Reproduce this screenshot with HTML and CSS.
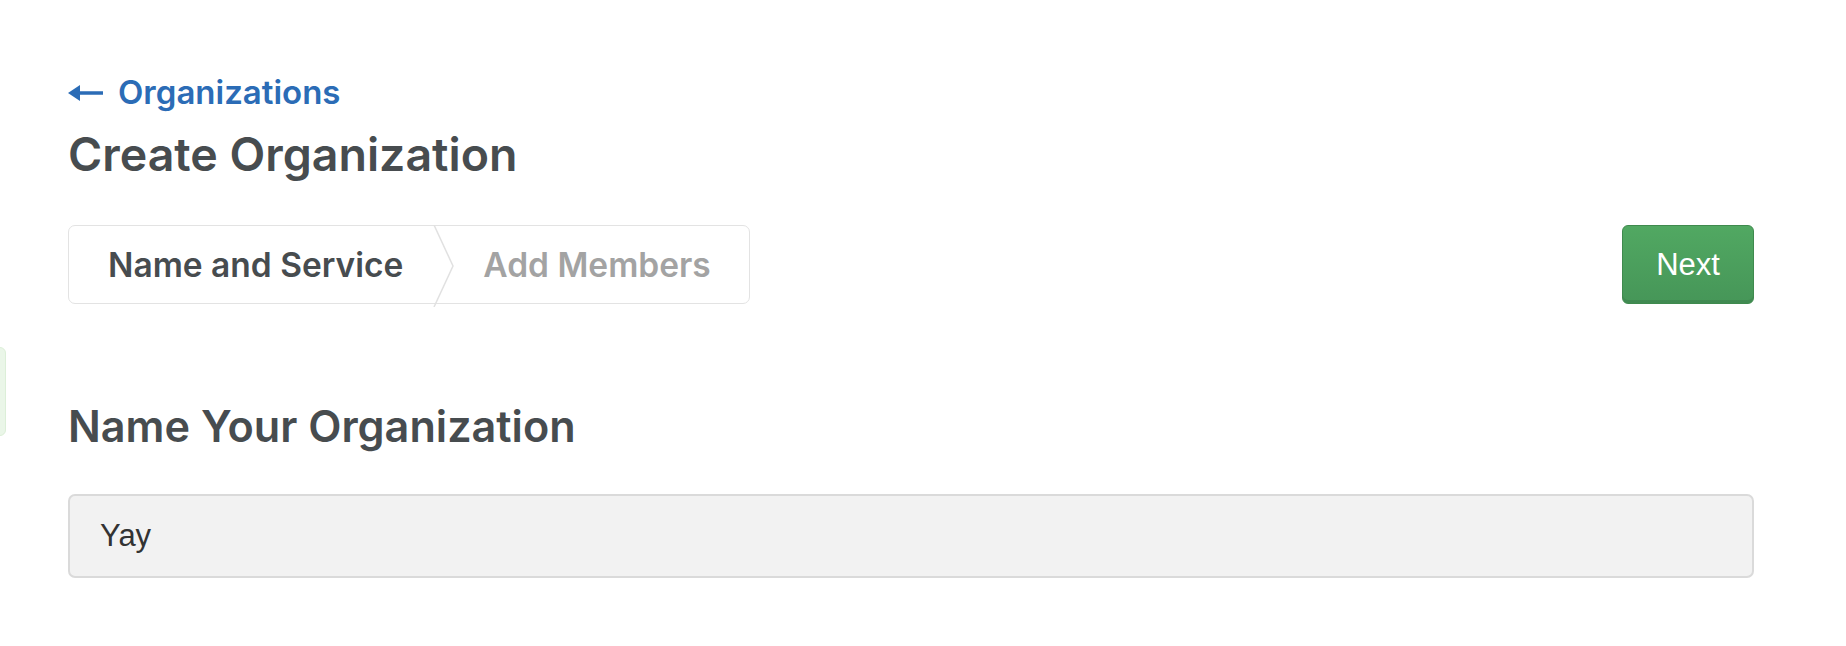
FILE: index.html
```html
<!DOCTYPE html>
<html lang="en">
<head>
<meta charset="utf-8">
<title>Create Organization</title>
<link rel="stylesheet" href="styles.css">
</head>
<body>
<div class="side-tab"></div>
<main class="page">
  <a class="back-link" href="#">
    <svg class="back-arrow" width="35" height="18" viewBox="0 0 35 18" aria-hidden="true">
      <path d="M0 9 L12 1 L12 7.2 L35 7.2 L35 10.8 L12 10.8 L12 17 Z" fill="currentColor"/>
    </svg>
    <span>Organizations</span>
  </a>
  <h1 class="title">Create Organization</h1>

  <div class="toolbar">
    <div class="steps">
      <div class="step step-active"><span>Name and Service</span>
        <svg class="chevron" width="22" height="82" viewBox="0 0 22 82" aria-hidden="true">
          <polyline points="1,0 20,41 1,82" fill="none" stroke="#e1e1e1" stroke-width="1.5"/>
        </svg>
      </div>
      <div class="step step-next"><span>Add Members</span></div>
    </div>
    <button class="btn-next" type="button">Next</button>
  </div>

  <h2 class="section-title">Name Your Organization</h2>
  <div class="input-box">Yay</div>
</main>
</body>
</html>
```
FILE: styles.css
```css
* { box-sizing: border-box; }

html, body {
  margin: 0;
  padding: 0;
  background: #ffffff;
}

body {
  font-family: Inter, "Liberation Sans", sans-serif;
  color: #474c4f;
}

.side-tab {
  position: absolute;
  left: -8px;
  top: 347px;
  width: 14px;
  height: 89px;
  background: #eaf6e8;
  border: 1px solid #dcefd8;
  border-radius: 6px;
}

.page {
  padding: 72px 92px 0 68px;
}

.back-link {
  display: flex;
  align-items: center;
  gap: 15px;
  color: #2b6cb6;
  text-decoration: none;
  font-size: 33px;
  font-weight: 600;
  line-height: 40px;
}

.back-arrow {
  display: block;
  flex: none;
  margin-top: 2px;
}

.title {
  margin: 14px 0 0;
  font-size: 46.5px;
  font-weight: 600;
  line-height: 56px;
  color: #474c4f;
}

.toolbar {
  display: flex;
  justify-content: space-between;
  align-items: flex-start;
  margin-top: 43px;
}

.steps {
  display: flex;
  height: 79px;
  border: 1px solid #e3e3e3;
  border-radius: 7px;
  background: #fff;
}

.step {
  position: relative;
  display: flex;
  align-items: center;
  font-size: 33.5px;
  font-weight: 600;
}

.step-active {
  padding: 0 31px 0 39px;
  color: #474c4f;
}

.step-next {
  padding: 0 38px 0 49px;
  color: #a3a3a3;
}

.chevron {
  position: absolute;
  right: -21px;
  top: -1px;
}

.btn-next {
  width: 132px;
  height: 79px;
  border: 1px solid #3f8a4e;
  border-radius: 6px;
  background: linear-gradient(#51a862, #469658);
  box-shadow: inset 0 -3px 0 rgba(0, 0, 0, 0.08);
  color: #ffffff;
  font-family: "Liberation Sans", Arial, sans-serif;
  font-size: 31px;
  font-weight: 400;
  padding: 0;
}

.section-title {
  margin: 96px 0 0;
  font-size: 43.2px;
  font-weight: 600;
  line-height: 52px;
  color: #474c4f;
}

.input-box {
  display: flex;
  align-items: center;
  height: 84px;
  margin-top: 42px;
  padding: 0 30px;
  background: #f2f2f2;
  border: 2px solid #dadada;
  border-radius: 7px;
  font-family: "Liberation Sans", Arial, sans-serif;
  font-size: 31px;
  color: #333333;
}
```
